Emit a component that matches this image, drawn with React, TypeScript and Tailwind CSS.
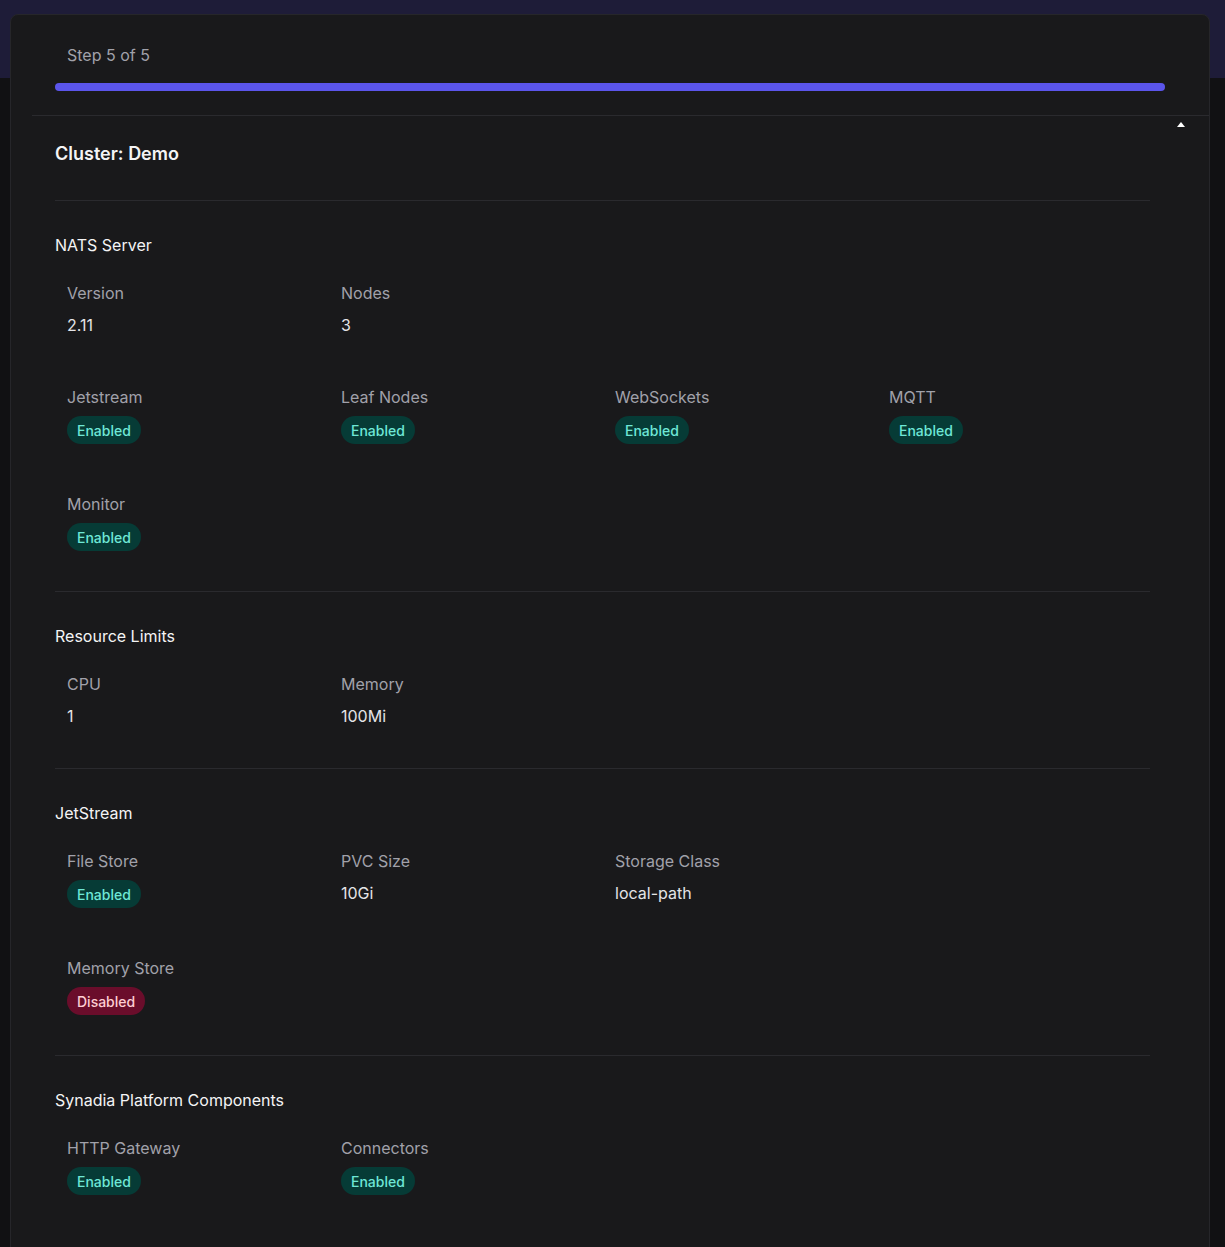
const on = { t: 'Enabled', on: true };
const off = { t: 'Disabled', on: false };

type Item = { label: string; value?: string; badge?: { t: string; on: boolean } };

const SECTIONS: { title: string; rows: Item[][] }[] = [
  {
    title: 'NATS Server',
    rows: [
      [{ label: 'Version', value: '2.11' }, { label: 'Nodes', value: '3' }],
      [
        { label: 'Jetstream', badge: on },
        { label: 'Leaf Nodes', badge: on },
        { label: 'WebSockets', badge: on },
        { label: 'MQTT', badge: on },
      ],
      [{ label: 'Monitor', badge: on }],
    ],
  },
  {
    title: 'Resource Limits',
    rows: [[{ label: 'CPU', value: '1' }, { label: 'Memory', value: '100Mi' }]],
  },
  {
    title: 'JetStream',
    rows: [
      [
        { label: 'File Store', badge: on },
        { label: 'PVC Size', value: '10Gi' },
        { label: 'Storage Class', value: 'local-path' },
      ],
      [{ label: 'Memory Store', badge: off }],
    ],
  },
  {
    title: 'Synadia Platform Components',
    rows: [[{ label: 'HTTP Gateway', badge: on }, { label: 'Connectors', badge: on }]],
  },
];

function Field({ item }: { item: Item }) {
  return (
    <div>
      <div className="text-[16px] leading-6 text-[#a1a1aa]">{item.label}</div>
      {item.value && <div className="mt-2 text-[16px] leading-6 text-[#e4e4e7]">{item.value}</div>}
      {item.badge && (
        <span
          className={
            'mt-[7px] inline-flex h-[28px] items-center rounded-full px-[10px] text-[14px] font-medium ' +
            (item.badge.on ? 'bg-[#063b36] text-[#6ee7d6]' : 'bg-[#6a0d2b] text-[#fecdd3]')
          }
        >
          {item.badge.t}
        </span>
      )}
    </div>
  );
}

export default function App() {
  return (
    <div className="min-h-[1247px] bg-[#111113] font-[Inter,sans-serif]">
      <div className="h-[78px] bg-[#1e1c38]" />
      <div className="relative -mt-[64px] mx-[10px] w-[1200px] rounded-t-lg border border-[#26262a] bg-[#19191b] pb-10">
        <div className="px-[44px] pt-[28px]">
          <div className="px-3 text-[16px] text-[#a1a1aa]">Step 5 of 5</div>
          <div className="mt-[16px] h-2 rounded-full bg-[#5b55eb]" />
        </div>
        <div className="mt-6 ml-[21px] border-t border-[#2a2a2e]" />
        <div className="absolute right-[24px] top-[107px] h-0 w-0 border-x-[4px] border-b-[5px] border-x-transparent border-b-white" />
        <div className="px-[44px] pr-[59px]">
          <h1 className="pt-[24px] pb-[33px] text-[18px] font-semibold text-[#f4f4f5]">Cluster: Demo</h1>
          {SECTIONS.map((s) => (
            <section key={s.title} className="border-t border-[#2a2a2e] pt-8 pb-10">
              <h2 className="mb-6 text-[16px] leading-6 text-[#f4f4f5]">{s.title}</h2>
              <div className="flex flex-col gap-12 px-3">
                {s.rows.map((r, i) => (
                  <div key={i} className="grid grid-cols-4 w-[1096px]">
                    {r.map((it) => (
                      <Field key={it.label} item={it} />
                    ))}
                  </div>
                ))}
              </div>
            </section>
          ))}
        </div>
      </div>
    </div>
  );
}
